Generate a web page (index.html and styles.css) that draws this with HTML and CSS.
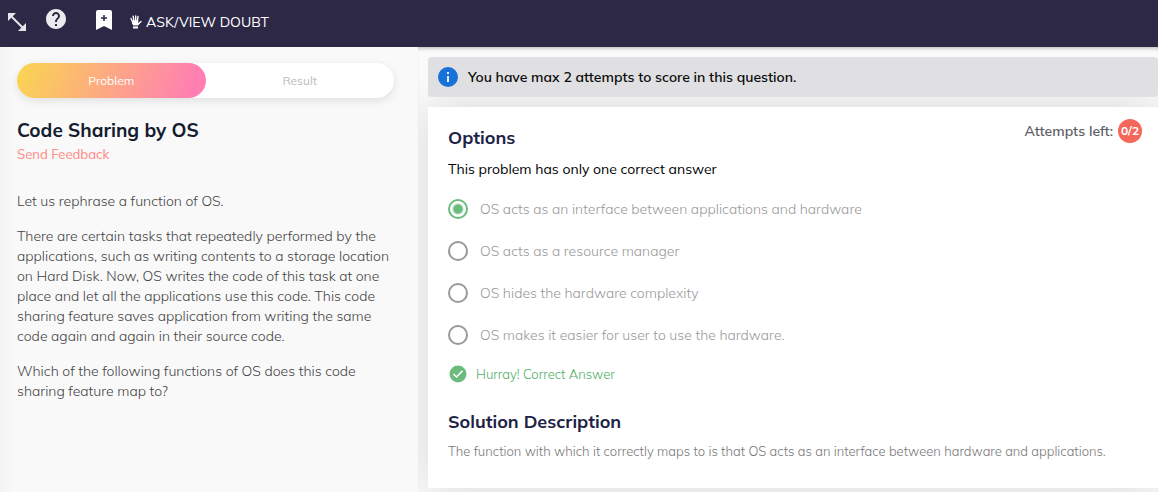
FILE: index.html
```html
<!DOCTYPE html>
<html lang="en">
<head>
<meta charset="utf-8">
<meta name="viewport" content="width=device-width, initial-scale=1">
<title>Code Sharing by OS</title>
<link rel="stylesheet" href="styles.css">
</head>
<body>
<header class="topbar">
  <button class="icon-btn expand" type="button" aria-label="Expand">
    <svg width="18" height="18" viewBox="0 0 18 18"><path d="M3 3 15 15" stroke="#e6e6e8" stroke-width="2"/><path d="M0 0H8L0 8ZM18 18H10L18 10Z" fill="#e6e6e8"/></svg>
  </button>
  <button class="icon-btn help" type="button" aria-label="Help">
    <svg width="20" height="20" viewBox="2 2 20 20"><path fill="#ebebed" d="M12 2C6.480 2 2 6.480 2 12s4.480 10 10 10 10-4.480 10-10S17.520 2 12 2zm1 17h-2v-2h2v2zm2.070-7.750-.9.920C13.450 12.900 13 13.500 13 15h-2v-.5c0-1.100.45-2.100 1.170-2.830l1.240-1.260c.37-.36.59-.86.59-1.410 0-1.100-.9-2-2-2s-2 .9-2 2H8c0-2.210 1.790-4 4-4s4 1.790 4 4c0 .88-.36 1.680-.93 2.250z"/></svg>
  </button>
  <button class="icon-btn bookmark" type="button" aria-label="Bookmark">
    <svg width="16" height="20" viewBox="0 0 16 20"><path d="M2 0H14Q16 0 16 2V20L8 16 0 20V2Q0 0 2 0Z" fill="#fff"/><path d="M8 5V11M5 8H11" stroke="#2c2846" stroke-width="1.500"/></svg>
  </button>
  <button class="doubt" type="button">
    <svg width="12" height="14" viewBox="0 0 12 14"><path d="M2.600 7 1 3.500M4 6 3.200 1.300M5.700 6V1M7.400 6 8 1.500M8.300 9 11 6.500" stroke="#fff" stroke-width="1.400" stroke-linecap="round"/><path d="M2 5.500H8.300V8L9.500 8 8 10.500H3.300L2 8.500ZM3 11.500H8V13.500H3Z" fill="#fff"/></svg>
    <span>ASK/VIEW DOUBT</span>
  </button>
</header>
<div class="workspace">
  <section class="problem">
    <div class="tabs" role="tablist">
      <button class="tab active" type="button" role="tab" aria-selected="true">Problem</button>
      <button class="tab" type="button" role="tab" aria-selected="false">Result</button>
    </div>
    <h1 class="heading title">Code Sharing by OS</h1>
    <a class="feedback" href="#">Send Feedback</a>
    <div class="statement">
      <p>Let us rephrase a function of OS.</p>
      <p>There are certain tasks that repeatedly performed by the applications, such as writing contents to a storage location on Hard Disk. Now, OS writes the code of this task at one place and let all the applications use this code. This code sharing feature saves application from writing the same code again and again in their source code.</p>
      <p>Which of the following functions of OS does this code sharing feature map to?</p>
    </div>
  </section>
  <main class="answer">
    <div class="notice">
      <svg width="20" height="20" viewBox="0 0 20 20"><circle cx="10" cy="10" r="10" fill="#1771d6"/><path d="M9 5H11V7H9ZM9 9H11V15H9Z" fill="#e4eefa"/></svg>
      <span>You have max 2 attempts to score in this question.</span>
    </div>
    <div class="card">
      <div class="card-head">
        <h2 class="heading navy">Options</h2>
        <div class="attempts">Attempts left: <span class="count">0/2</span></div>
      </div>
      <form>
        <fieldset class="options">
          <legend>This problem has only one correct answer</legend>
          <label class="option"><input type="radio" name="answer" checked><span>OS acts as an interface between applications and hardware</span></label>
          <label class="option"><input type="radio" name="answer"><span>OS acts as a resource manager</span></label>
          <label class="option"><input type="radio" name="answer"><span>OS hides the hardware complexity</span></label>
          <label class="option"><input type="radio" name="answer"><span>OS makes it easier for user to use the hardware.</span></label>
        </fieldset>
      </form>
      <div class="verdict">
        <svg width="20" height="20" viewBox="0 0 20 20"><circle cx="10" cy="10" r="8.500" fill="#6abb7c"/><path d="M5.500 10.200 8.500 13 14.500 6.800" fill="none" stroke="#fff" stroke-width="1.600"/></svg>
        <span>Hurray! Correct Answer</span>
      </div>
      <h2 class="heading navy">Solution Description</h2>
      <p class="solution">The function with which it correctly maps to is that OS acts as an interface between hardware and applications.</p>
    </div>
  </main>
</div>
</body>
</html>
```
FILE: styles.css
```css
* { box-sizing: border-box; }
body {
  margin: 0;
  min-height: 100vh;
  display: flex;
  flex-direction: column;
  background: #f9f9f9;
  font-family: Muli, Mulish, "Open Sans", sans-serif;
  font-size: 14px;
  line-height: 20px;
  color: #666;
}
button { font: inherit; border: 0; padding: 0; background: none; cursor: pointer; }
svg { display: block; flex: none; }
h1, h2, p { margin: 0; }
.topbar {
  display: flex;
  align-items: flex-start;
  height: 47px;
  padding: 9px 8px 0;
  background: #2c2846;
}
.expand { padding-top: 4px; }
.help { margin-left: 20px; }
.bookmark { margin-left: 30px; padding-top: 1px; }
.doubt {
  display: flex;
  align-items: center;
  gap: 4px;
  margin-left: 18px;
  padding-top: 3px;
  color: #fff;
}
.workspace { flex: 1; display: flex; }
.problem {
  flex: 0 0 418px;
  padding: 16px 24px 16px 17px;
  background: linear-gradient(90deg, #f3f3f3, #f9f9f9 14px);
}
.tabs {
  display: flex;
  border-radius: 18px;
  background: #fff;
  box-shadow: 0 3px 10px rgba(0, 0, 0, .1);
}
.tab {
  flex: 1;
  height: 35px;
  border-radius: 18px;
  font-size: 12px;
  color: #bdbdbd;
}
.tab.active {
  color: #fff;
  background: linear-gradient(110deg, #fad650, #ff7fb2 92%);
}
.heading {
  font-size: 18px;
  line-height: 24px;
  font-weight: 700;
  color: #151c2e;
}
.heading.title { margin-top: 20px; font-size: 19px; }
.heading.navy { color: #1d2344; }
.feedback {
  display: block;
  margin-top: 2px;
  font-size: 13px;
  font-weight: 500;
  color: #ff918c;
  text-decoration: none;
}
.statement {
  display: flex;
  flex-direction: column;
  gap: 15px;
  margin-top: 27px;
  font-weight: 300;
  color: #444;
}
.answer {
  flex: 1;
  min-width: 0;
  padding: 10px 0 4px 10px;
  display: flex;
  flex-direction: column;
  gap: 10px;
  overflow: hidden;
  background: #fafafa;
  box-shadow: inset 0 4px 4px -3px rgba(0, 0, 0, .3);
}
.notice {
  z-index: 1;
  display: flex;
  align-items: center;
  gap: 10px;
  min-height: 40px;
  padding: 0 10px;
  border-radius: 4px;
  background: #e0e0e2;
  color: #0a0a0a;
  font-weight: 600;
}
.card {
  flex: 1;
  padding: 19px 16px 20px 20px;
  background: #fff;
  box-shadow: 0 0 40px rgba(0, 0, 0, .14);
}
.card-head { display: flex; justify-content: space-between; align-items: flex-start; }
.attempts {
  display: flex;
  align-items: center;
  gap: 5px;
  margin-top: -7px;
  font-weight: 600;
  color: #5f6066;
}
.count {
  width: 24px;
  height: 24px;
  border-radius: 50%;
  background: #f5665b;
  color: #fff;
  font-size: 12px;
  line-height: 24px;
  font-weight: 700;
  text-align: center;
}
.options { margin: 0; padding: 0; border: 0; min-width: 0; }
.options legend { padding: 9px 0; color: #000; }
.option {
  display: flex;
  align-items: center;
  gap: 12px;
  height: 42px;
  font-weight: 300;
  color: #999;
}
.option input {
  appearance: none;
  flex: none;
  width: 20px;
  height: 20px;
  margin: 0;
  border: 2px solid #999;
  border-radius: 50%;
}
.option input:checked {
  border-color: #6abb7c;
  background: radial-gradient(circle, #6abb7c 4px, transparent 6px);
}
.verdict {
  display: flex;
  align-items: center;
  gap: 8px;
  margin: 8px 0 26px;
  font-size: 13px;
  font-weight: 300;
  color: #4fae64;
}
.solution { margin-top: 7px; font-size: 13px; font-weight: 300; color: #777; }
```
